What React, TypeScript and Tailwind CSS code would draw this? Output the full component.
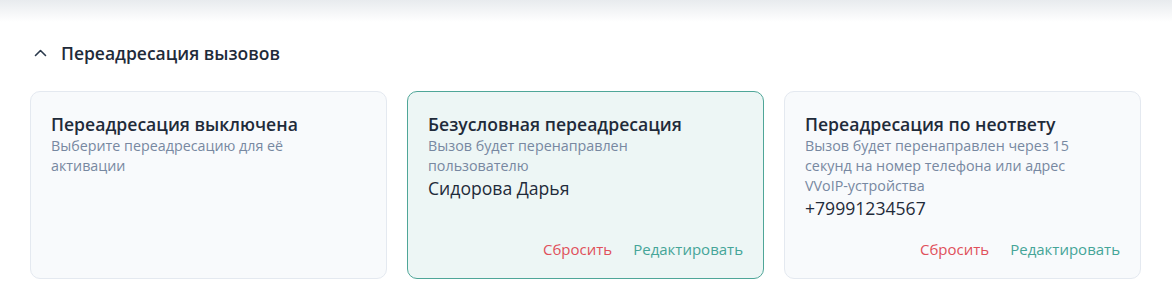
import React from "react";

interface ForwardCardProps {
  title: string;
  description: string;
  value?: string;
  active?: boolean;
  actions?: boolean;
}

function ForwardCard({ title, description, value, active = false, actions = false }: ForwardCardProps) {
  return (
    <div
      className={`flex h-[188px] flex-col rounded-[10px] border px-[20px] pt-[20px] pb-[19px] ${
        active ? "border-[#4fa698] bg-[#edf6f5]" : "border-[#e4e9f0] bg-[#f8fafc]"
      }`}
    >
      <div className="text-[17.6px] leading-[24px] font-semibold text-[#1f2b3a]">{title}</div>
      <div className="max-w-[292px] text-[14.3px] leading-[20px] text-[#7788a1]">{description}</div>
      {value && <div className="text-[17.6px] leading-[24px] text-[#1f2b3a]">{value}</div>}
      {actions && (
        <div className="mt-auto flex justify-end gap-[21px] text-[15px] leading-[20px]">
          <button className="text-[#e0505a]">Сбросить</button>
          <button className="text-[#45a598]">Редактировать</button>
        </div>
      )}
    </div>
  );
}

export default function App() {
  return (
    <div className="min-h-[305px] w-[1172px] bg-white font-['Open_Sans',sans-serif]">
      <div className="h-[22px] bg-gradient-to-b from-[#e8ebee] to-white" />
      <div className="px-[30px]">
        <div className="mt-[19px] flex h-[24px] items-center gap-[14px] pl-[4px]">
          <svg width="13" height="8" viewBox="0 0 13 8" fill="none">
            <path d="M1.5 6.5 L6.5 1.5 L11.5 6.5" stroke="#2b3a4d" strokeWidth="1.6" strokeLinecap="round" strokeLinejoin="round" />
          </svg>
          <span className="text-[17.5px] font-semibold text-[#1f2b3a]">Переадресация вызовов</span>
        </div>
        <div className="mt-[26px] grid grid-cols-3 gap-[20px] pr-[1px]">
          <ForwardCard
            title="Переадресация выключена"
            description="Выберите переадресацию для её активации"
          />
          <ForwardCard
            title="Безусловная переадресация"
            description="Вызов будет перенаправлен пользователю"
            value="Сидорова Дарья"
            active
            actions
          />
          <ForwardCard
            title="Переадресация по неответу"
            description="Вызов будет перенаправлен через 15 секунд на номер телефона или адрес VVoIP-устройства"
            value="+79991234567"
            actions
          />
        </div>
      </div>
    </div>
  );
}
